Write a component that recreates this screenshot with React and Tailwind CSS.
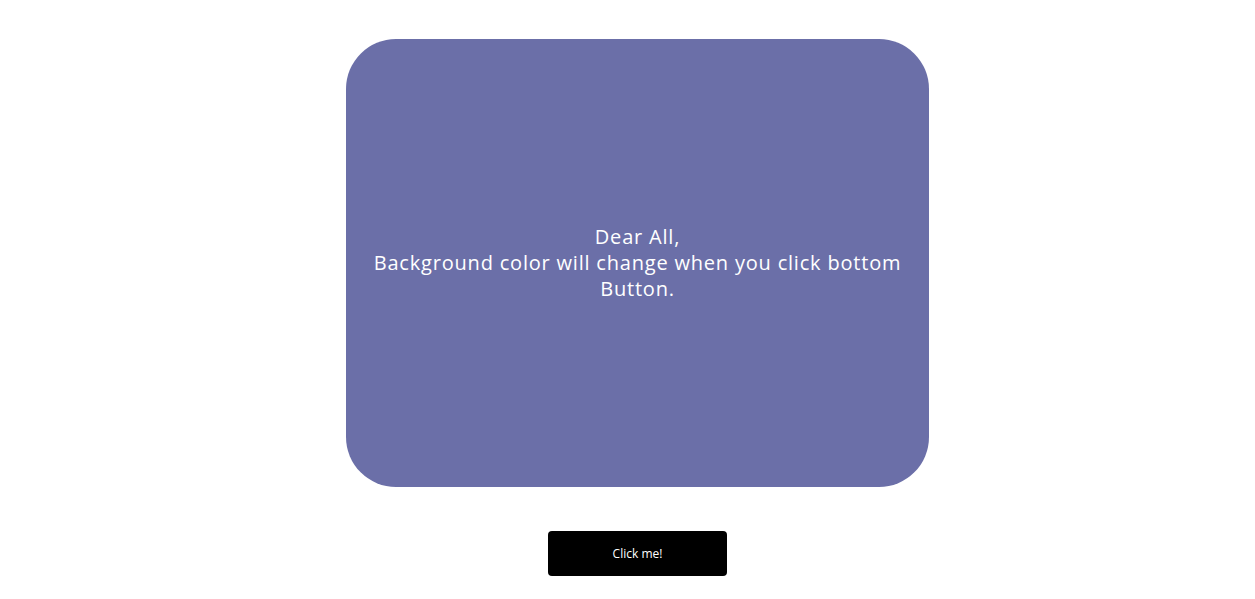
import React, { useState } from "react";

// full class names so tailwind picks them up
const colors = ["bg-[#6b6fa8]", "bg-[#a86b8f]", "bg-[#6ba88a]", "bg-[#a8956b]"];

const App = () => {
  const [idx, setIdx] = useState(0);

  return (
    <div className="min-h-screen bg-white pl-[20px] pt-[39px] flex flex-col items-center font-['Open_Sans',sans-serif]">
      <div
        className={`w-[583px] h-[448px] rounded-[50px] flex items-center justify-center px-[20px] text-white text-[20px] leading-[26px] tracking-[0.8px] text-center ${colors[idx]}`}
      >
        <p>
          Dear All,
          <br />
          Background color will change when you click bottom Button.
        </p>
      </div>
      <button
        onClick={() => setIdx((i) => (i + 1) % colors.length)}
        className="mt-[44px] w-[179px] h-[45px] rounded-[4px] bg-black text-white text-[12px]"
      >
        Click me!
      </button>
    </div>
  );
};

export default App;
